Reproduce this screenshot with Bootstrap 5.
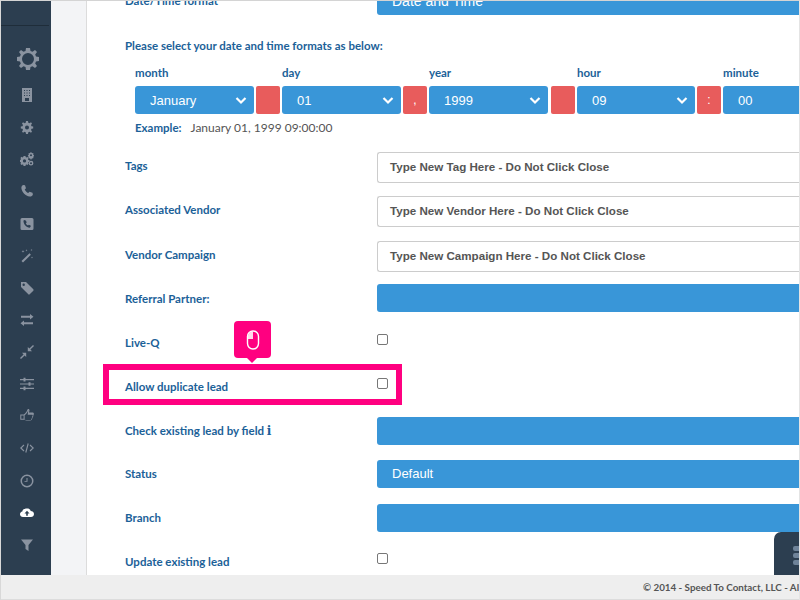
<!DOCTYPE html>
<html lang="en">
<head>
<meta charset="utf-8">
<title>Lead settings</title>
<link href="https://cdn.jsdelivr.net/npm/bootstrap@5.3.0/dist/css/bootstrap.min.css" rel="stylesheet">
<style>
html,body{height:100%;overflow:hidden;margin:0;background:#fff}
.frame{width:800px;height:600px;position:relative;overflow:hidden;display:flex;flex-direction:column;border-top:1px solid #d4d4d4;border-left:1px solid #d8d8d8;border-right:1px solid #e4e4e4}
.upper{flex:1;min-height:0;display:flex}
.rail{width:50px;background:#2c3e50;flex:none;position:relative;display:flex;flex-direction:column;align-items:center}
.rail-rule{width:48px;height:1px;background:#1f2d3a;margin:24px 0 0 -2px;flex:none}
.rail-big{height:41px;margin-top:12px;flex:none;display:flex;align-items:center;position:relative;left:2px}
.rail-caret{position:absolute;left:-26px;top:18px;width:0;height:0;border-left:4px solid transparent;border-right:4px solid transparent;border-top:5px solid #8a93a0}
.rail-item{height:32.14px;flex:none;display:flex;align-items:center;justify-content:center;color:#8a93a0;margin-left:1px}
.rail-item svg{width:14px;height:14px;fill:currentColor;display:block}
.rail-on{color:#fff}
.gutter{width:36px;background:#f3f4f6;border-right:1px solid #dcdcdc;flex:none}
.pane{flex:1;min-width:0;overflow:hidden}
.sheet{margin-top:-14px;padding-left:38px}
.fld-row{display:flex;align-items:flex-start}
.r30{height:30px}.r39{height:39px}.r43{height:43px}.r44{height:44px}.r45{height:45px}.r49{height:49px}.r50{height:50px}.r51{height:51px}
.fld-label{width:252px;flex:none;color:#1b6198;font:700 11.5px/16px Lato,sans-serif;margin-top:6px}
.fld-label.near{margin-top:1px}
.fld-label.low{margin-top:7px}
.info-i{font:700 12px/16px "DejaVu Serif",serif}
.fld-ctl{flex:1;min-width:0}
.blue-bar{height:28px;background:#3996d8;border-radius:3px 0 0 3px;color:#fff;font:13px/28px "Liberation Sans",sans-serif;padding-left:15px}
.blue-bar.wide{font-size:14px}
.tag-in{height:31px;border:1px solid #ccc;border-right:0;border-radius:3px 0 0 3px;color:#555;font:700 11.6px/28px "Liberation Sans",sans-serif;padding-left:12px;background:#fff}
.fmt-head{color:#1b6198;font:700 11.5px/16px Lato,sans-serif}
.fmt-grid{display:flex;gap:2px;margin:11px 0 0 10px;width:700px}
.fmt-cell{flex:none;width:119px}
.fmt-cap{color:#1b6198;font:700 11.5px/16px Lato,sans-serif;height:21px}
.fmt-sep{flex:none;width:24px;margin-top:21px;height:28px;background:#e85c5c;border-radius:2px;color:#fff;text-align:center;font:12px/28px "Liberation Sans",sans-serif}
.fmt-sep.pushed{margin-left:1px}
.fmt-cell.slim{width:118px}
.fmt-cell .form-select{height:28px;background-color:#3996d8;border:0;border-radius:3px;color:#fff;font:13px/28px "Liberation Sans",sans-serif;padding:1px 20px 0 15px;background-size:12px 9px;background-position:right 7px center;background-image:url("data:image/svg+xml,%3csvg xmlns='http://www.w3.org/2000/svg' viewBox='0 0 12 9'%3e%3cpath fill='none' stroke='%23fff' stroke-width='2.2' d='M1.500 2l4.500 4.500L10.500 2'/%3e%3c/svg%3e")}
.fmt-last .form-select{background-image:none;border-radius:3px 0 0 3px}
.fmt-cell.fmt-last{width:77px}
.example{margin:6px 0 16px 10px;font:12px/16px Lato,sans-serif;color:#555;display:flex;gap:9px}
.example b{color:#1b6198;font-weight:700;font-size:11.5px}
.fld-check[type=checkbox]{width:11px;height:11px;margin:0;padding:0;border:1px solid #777;border-radius:2px;display:block;box-shadow:none;flex:none}
.foot{height:25px;flex:none;background:#eee;border-bottom:1px solid #dcdcdc;color:#555;font:700 9.8px/24px Lato,sans-serif;white-space:nowrap;padding-left:642px;overflow:hidden}
.hi-box{position:absolute;left:102px;top:363px;width:299px;height:41px;border:6px solid #ff0080;pointer-events:none}
.hi-tip{position:absolute;left:233px;top:320px;width:37px;height:37px;border-radius:4px;background:#ff0080;display:flex;align-items:center;justify-content:center}
.hi-tip::after{content:"";position:absolute;left:13px;top:37px;border-left:5px solid transparent;border-right:5px solid transparent;border-top:5px solid #ff0080}
.dock{position:absolute;left:773px;top:531px;width:26px;height:43px;background:#2c3e50;border-radius:7px 0 0 0;display:flex;flex-direction:column;gap:2px;padding:14px 0 0 19px}
.dock span{display:block;height:5px;width:7px;background:#6f8399;border-radius:2px 0 0 2px}
</style>
</head>
<body>
<div class="frame">
  <div class="upper">
    <nav class="rail">
      <div class="rail-rule"></div>
      <div class="rail-big"><span class="rail-caret"></span>
        <svg width="22" height="22" viewBox="0 0 22 22"><path fill="#8a93a0" fill-rule="evenodd" d="M9 0h4l.5 3 2 .8L18 2l2 2-1.800 2.500.8 2 3 .5v4l-3 .5-.8 2L20 18l-2 2-2.500-1.800-2 .8-.5 3H9l-.5-3-2-.8L4 20l-2-2 1.800-2.500-.8-2L0 13V9l3-.5.8-2L2 4l2-2 2.500 1.800 2-.8zM11 5a6 6 0 1 0 0 12 6 6 0 0 0 0-12z"/></svg>
      </div>
      <div class="rail-item"><svg viewBox="0 0 14 14"><path fill-rule="evenodd" d="M2 0h10v14H2zM4 2v1h1V2zm2.500 0v1h1V2zM9 2v1h1V2zM4 4.500v1h1v-1zm2.500 0v1h1v-1zm2.500 0v1h1v-1zM4 7v1h1V7zm2.500 0v1h1V7zM9 7v1h1V7zM5 10v3h4v-3z"/></svg></div>
      <div class="rail-item"><svg viewBox="0 0 14 14"><path fill-rule="evenodd" d="M6 1h2l.3 1.700 1.200.5L11 2.200 12 3.600l-1 1.400.5 1.200 1.700.3v2l-1.700.3-.5 1.200 1 1.400-1 1.400-1.500-1-1.200.5L8 14H6l-.3-1.700-1.200-.5-1.500 1-1-1.400 1-1.400-.5-1.200L.8 8.500v-2l1.700-.3.500-1.200-1-1.400 1-1.400 1.500 1 1.200-.5zM7 5.500a2 2 0 1 0 0 4 2 2 0 0 0 0-4z"/></svg></div>
      <div class="rail-item"><svg viewBox="0 0 14 14"><path fill-rule="evenodd" d="M3.500 4h2l.2 1.100.9.400.9-.6 1.100 1.200-.6.900.4.900L9.500 8v1.800l-1.100.2-.4.900.6.900-1.100 1.200-.9-.6-.9.400-.2 1.100h-2l-.2-1.100-.9-.4-.9.600L.400 11.800l.6-.9-.4-.9L-.500 9.800V8l1.100-.2.400-.900L.4 6l1.100-1.200.9.600.9-.4zM4.500 7.300a1.600 1.600 0 1 0 0 3.200 1.600 1.600 0 0 0 0-3.200zM10.500 0l1 .2.100.7.700.4.6-.3.700.8-.4.600.2.700.7.200v1l-.7.200-.2.700.4.600-.7.800-.6-.3-.7.400-.1.700h-1l-.1-.7-.7-.4-.6.300-.7-.8.400-.6-.2-.7-.7-.2v-1l.7-.2.200-.7-.4-.6.700-.8.600.3.700-.4zM11 2.300a1 1 0 1 0 0 2 1 1 0 0 0 0-2zM11 8.800a2.400 2.400 0 1 1 0 4.800 2.400 2.400 0 0 1 0-4.800zM11 10.200a1 1 0 1 0 0 2 1 1 0 0 0 0-2z"/></svg></div>
      <div class="rail-item"><svg viewBox="0 0 14 14"><path d="M3.200 1 5 1.300l1 3-1.300 1.200c.7 1.600 1.900 2.800 3.500 3.500L9.500 7.700l3 1 .4 1.800c-.6 1.500-1.900 2.200-3.300 2C5.500 12 2 8.500 1.400 4.300 1.200 2.900 1.900 1.600 3.200 1z"/></svg></div>
      <div class="rail-item"><svg viewBox="0 0 14 14"><path fill-rule="evenodd" d="M2 1h10a1.500 1.500 0 0 1 1.500 1.500v9A1.500 1.500 0 0 1 12 13H2A1.500 1.500 0 0 1 .5 11.500v-9A1.500 1.500 0 0 1 2 1zm2.700 2L3.500 3.400c-.3 3.400 2.600 7 6.300 7.300l.9-1.200-.1-1.100-1.800-.7-.8.900c-1-.5-1.700-1.200-2.200-2.300l.9-.8-.7-1.800z"/></svg></div>
      <div class="rail-item"><svg viewBox="0 0 14 14"><path d="M9.500 4.300l1.400 1.400L3 13.500 1.500 12zM3 1l.4 1L4.500 2.300l-1.100.4L3 3.700l-.4-1L1.500 2.300l1.100-.3zM6.500.300l.3.800.8.200-.8.300-.3.800-.3-.8-.8-.3.800-.2zM11.500 0l.3.800.8.200-.8.300-.3.800-.3-.8-.8-.3.800-.2zM12 7.500l.3.800.8.200-.8.300-.3.800-.3-.8-.8-.3.800-.2z"/></svg></div>
      <div class="rail-item"><svg viewBox="0 0 14 14"><path fill-rule="evenodd" d="M1 1h5l7.300 7.300a1 1 0 0 1 0 1.400l-3.600 3.600a1 1 0 0 1-1.400 0L1 6zm2.700 1.500a1.200 1.200 0 1 0 0 2.400 1.200 1.200 0 0 0 0-2.400z"/></svg></div>
      <div class="rail-item"><svg viewBox="0 0 14 14"><path d="M10 1l3.500 2.800L10 6.500V4.800H1V2.800h9zM4 7.500v1.700h9v2H4V13L.5 10.200z"/></svg></div>
      <div class="rail-item"><svg viewBox="0 0 14 14"><path d="M13 0l1 1-3.600 3.600L12 6.200H7.800V2l1.600 1.600zM6.200 7.800V12l-1.600-1.600L1 14l-1-1 3.600-3.600L2 7.800z"/></svg></div>
      <div class="rail-item"><svg viewBox="0 0 14 14"><path d="M0 2h3.500V.8h2V2H14v1.200H5.500v1.200h-2V3.200H0zM0 6.400h8.500V5.200h2v1.200H14v1.200h-3.500v1.200h-2V7.600H0zM0 10.800h3.500V9.600h2v1.200H14V12H5.500v1.200h-2V12H0z"/></svg></div>
      <div class="rail-item"><svg viewBox="0 0 14 14"><path fill-rule="evenodd" d="M8.200 0c1 0 1.400.9 1.200 1.800L9 3.500h3.600c1 0 1.500 1 1.200 1.800 0 .7-.3 1-.6 1.400.2.700 0 1.200-.5 1.600.1.700-.2 1.200-.7 1.500 0 1-.7 1.700-1.700 1.700H6.500c-.8 0-1.300-.4-2-.7H.3V5.500h3.500C5.500 4.500 7 2.500 7.400.8c.1-.4.400-.8.800-.8zM8.300 1.100C7.900 3 6.300 5.300 4.600 6.200v4.200c.7.200 1.300.7 2 .7h3.800c.6 0 .9-.4.700-1 .5-.1.800-.7.600-1.200.5-.2.700-.8.400-1.300.5-.2.800-1 .5-1.400-.1-.3-.3-.4-.6-.4H7.700zM1.300 6.500v3.300h2.300V6.500z"/></svg></div>
      <div class="rail-item"><svg viewBox="0 0 14 14"><path fill="none" stroke="currentColor" stroke-width="1.100" d="M4 4 .8 7 4 10M10 4l3.200 3L10 10M8.200 2.500 5.800 11.500"/></svg></div>
      <div class="rail-item"><svg viewBox="0 0 14 14"><path fill-rule="evenodd" d="M7 .5a6.500 6.500 0 1 1 0 13 6.500 6.500 0 0 1 0-13zm0 1.500a5 5 0 1 0 0 10 5 5 0 0 0 0-10zM7.500 4v3.800H4.500V7h2V4z"/></svg></div>
      <div class="rail-item rail-on"><svg viewBox="0 0 14 14"><path fill-rule="evenodd" d="M7.500 2.500c1.600 0 2.900 1.100 3.200 2.600 1.700.1 3.300 1.200 3.300 3 0 1.800-1.400 3-3 3H3c-1.700 0-3-1.200-3-2.800 0-1.400 1-2.500 2.300-2.700.3-1.800 1.500-3.100 5.200-3.100zM7 4.800 4.500 7.500h1.700v2.300h1.600V7.500h1.700z"/></svg></div>
      <div class="rail-item"><svg viewBox="0 0 14 14"><path d="M1 1.500h12L8.500 7v6L5.500 11V7z"/></svg></div>
    </nav>
    <div class="gutter"></div>
    <main class="pane">
      <div class="sheet">
        <div class="fld-row r51"><div class="fld-label">Date/Time format</div><div class="fld-ctl"><div class="blue-bar wide">Date and Time</div></div></div>
        <div class="fmt-head">Please select your date and time formats as below:</div>
        <div class="fmt-grid">
          <div class="fmt-cell"><div class="fmt-cap">month</div><select class="form-select" aria-label="month"><option>January</option></select></div>
          <div class="fmt-sep"></div>
          <div class="fmt-cell"><div class="fmt-cap">day</div><select class="form-select" aria-label="day"><option>01</option></select></div>
          <div class="fmt-sep">,</div>
          <div class="fmt-cell"><div class="fmt-cap">year</div><select class="form-select" aria-label="year"><option>1999</option></select></div>
          <div class="fmt-sep pushed"></div>
          <div class="fmt-cell slim"><div class="fmt-cap">hour</div><select class="form-select" aria-label="hour"><option>09</option></select></div>
          <div class="fmt-sep">:</div>
          <div class="fmt-cell fmt-last"><div class="fmt-cap">minute</div><select class="form-select" aria-label="minute"><option>00</option></select></div>
        </div>
        <div class="example"><b>Example:</b><span>January 01, 1999 09:00:00</span></div>
        <div class="fld-row r44"><div class="fld-label">Tags</div><div class="fld-ctl"><div class="tag-in">Type New Tag Here - Do Not Click Close</div></div></div>
        <div class="fld-row r45"><div class="fld-label">Associated Vendor</div><div class="fld-ctl"><div class="tag-in">Type New Vendor Here - Do Not Click Close</div></div></div>
        <div class="fld-row r43"><div class="fld-label">Vendor Campaign</div><div class="fld-ctl"><div class="tag-in">Type New Campaign Here - Do Not Click Close</div></div></div>
        <div class="fld-row r50"><div class="fld-label low">Referral Partner:</div><div class="fld-ctl"><div class="blue-bar"></div></div></div>
        <div class="fld-row r44"><div class="fld-label near">Live-Q</div><div class="fld-ctl"><input class="form-check-input fld-check" type="checkbox" aria-label="Live-Q"></div></div>
        <div class="fld-row r39"><div class="fld-label near">Allow duplicate lead</div><div class="fld-ctl"><input class="form-check-input fld-check" type="checkbox" aria-label="Allow duplicate lead"></div></div>
        <div class="fld-row r43"><div class="fld-label">Check existing lead by field <b class="info-i">i</b></div><div class="fld-ctl"><div class="blue-bar"></div></div></div>
        <div class="fld-row r44"><div class="fld-label">Status</div><div class="fld-ctl"><div class="blue-bar">Default</div></div></div>
        <div class="fld-row r49"><div class="fld-label">Branch</div><div class="fld-ctl"><div class="blue-bar"></div></div></div>
        <div class="fld-row r30"><div class="fld-label near">Update existing lead</div><div class="fld-ctl"><input class="form-check-input fld-check" type="checkbox" aria-label="Update existing lead"></div></div>
      </div>
    </main>
  </div>
  <footer class="foot">© 2014 - Speed To Contact, LLC - All Rights Reserved</footer>
  <div class="hi-box"></div>
  <div class="hi-tip"><svg width="14" height="20" viewBox="0 0 14 20"><rect x="1.500" y="1" width="11" height="18" rx="5.500" fill="none" stroke="#fff" stroke-width="1.400"/><path fill="#fff" d="M7 1.500a5 5 0 0 0-5 5V9h5z" opacity=".85"/></svg></div>
  <div class="dock"><span></span><span></span><span></span></div>
</div>
<script src="https://cdn.jsdelivr.net/npm/bootstrap@5.3.0/dist/js/bootstrap.bundle.min.js"></script>
</body>
</html>
